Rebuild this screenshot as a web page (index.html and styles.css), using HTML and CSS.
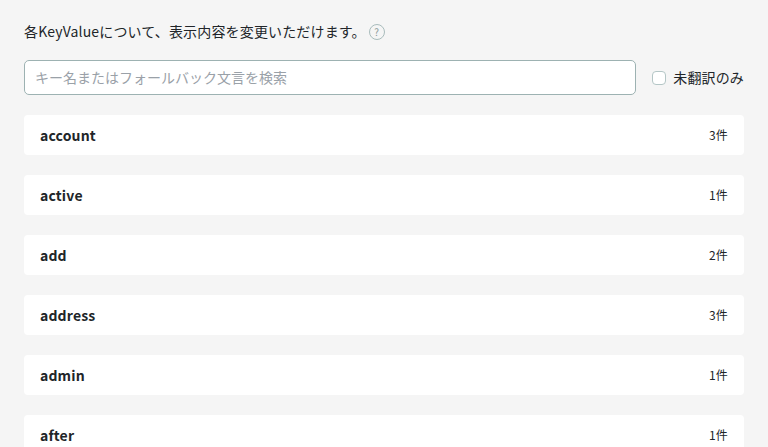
FILE: index.html
```html
<!DOCTYPE html>
<html lang="ja">
<head>
<meta charset="utf-8">
<title>KeyValue</title>
<link rel="stylesheet" href="styles.css">
</head>
<body>
<main class="page">
  <div class="intro">
    <span class="lead">各KeyValueについて、表示内容を変更いただけます。</span>
    <span class="help">?</span>
  </div>
  <div class="filters">
    <input class="search" type="text" placeholder="キー名またはフォールバック文言を検索">
    <label class="check"><span class="box"></span><span class="check-text">未翻訳のみ</span></label>
  </div>
  <ul class="list">
    <li class="row"><span class="key">account</span><span class="count">3件</span></li>
    <li class="row"><span class="key">active</span><span class="count">1件</span></li>
    <li class="row"><span class="key">add</span><span class="count">2件</span></li>
    <li class="row"><span class="key">address</span><span class="count">3件</span></li>
    <li class="row"><span class="key">admin</span><span class="count">1件</span></li>
    <li class="row"><span class="key">after</span><span class="count">1件</span></li>
  </ul>
</main>
</body>
</html>
```
FILE: styles.css
```css
* { box-sizing: border-box; }
html, body { margin: 0; height: 447px; overflow: hidden; }
body {
  background: #f5f5f5;
  color: #212529;
  font-family: "Noto Sans CJK JP", "Noto Sans", sans-serif;
  letter-spacing: 0.01em;
}
.page { padding: 20px 24px 0; }
.intro {
  display: flex;
  align-items: flex-start;
  gap: 3px;
  height: 24px;
  font-size: 14px;
}
.lead { line-height: 22px; }
.help {
  width: 16px;
  height: 16px;
  margin-top: 4px;
  border: 1px solid #a9bcbc;
  border-radius: 50%;
  color: #8a9a9a;
  font-size: 10px;
  line-height: 14px;
  text-align: center;
}
.filters {
  display: flex;
  align-items: center;
  gap: 16px;
  margin-top: 16px;
}
.search {
  flex: 1;
  min-width: 0;
  height: 35px;
  padding: 0 10px 2px;
  border: 1px solid #9db2b2;
  border-radius: 5px;
  background: #fff;
  font: 14px "Noto Sans CJK JP", sans-serif;
  letter-spacing: 0;
  color: #212529;
  outline: none;
}
.search::placeholder { color: #9aa1a8; opacity: 1; }
.check {
  display: flex;
  align-items: center;
  gap: 7px;
  font-size: 14px;
  line-height: 20px;
  letter-spacing: 0.01em;
}
.check-text { padding-bottom: 2px; }
.box {
  width: 14px;
  height: 14px;
  border: 1px solid #b4c6c6;
  border-radius: 4px;
  background: #fff;
}
.list {
  list-style: none;
  margin: 20px 0 0;
  padding: 0;
  display: flex;
  flex-direction: column;
  gap: 20px;
}
.row {
  flex: none;
  display: flex;
  align-items: center;
  justify-content: space-between;
  height: 40px;
  padding: 0 16px;
  background: #fff;
  border-radius: 4px;
}
.key { font-size: 14px; font-weight: 700; }
.count { font-size: 12px; padding-bottom: 2px; }
```
